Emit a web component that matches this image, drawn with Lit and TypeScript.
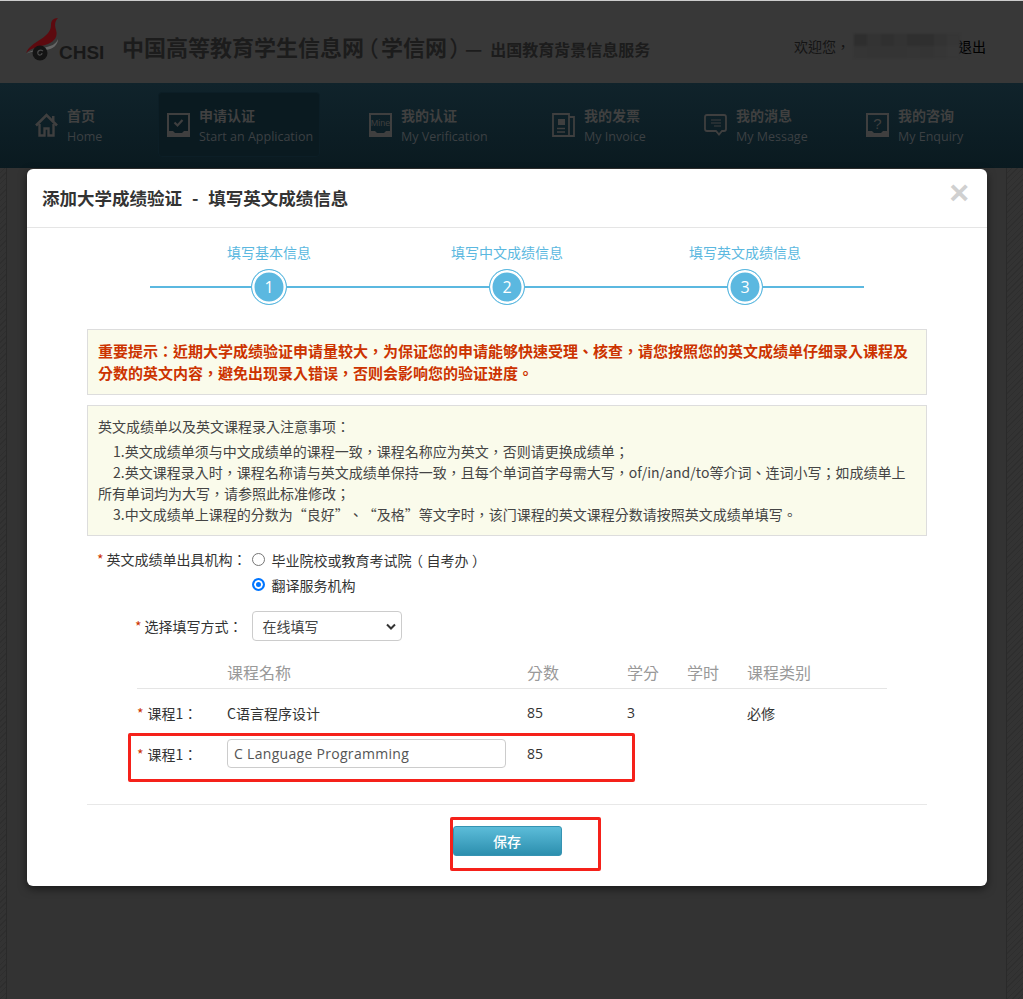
import { LitElement, html, css, svg } from "lit";
import { customElement } from "lit/decorators.js";

const C = "#3f3f3f";
const tray = svg`<path d="M1 1 H22 V23 H1 Z" fill="none" stroke="${C}" stroke-width="2"/><path d="M0 18 H6 L8 20 H15 L17 18 H23 V24 H0 Z" fill="${C}"/>`;
const icons: Record<string, unknown> = {
  home: svg`<path d="M1 12.500 L11.500 2 L22 12.500" fill="none" stroke="${C}" stroke-width="2.600"/><path d="M17 3 H19.500 V8 H17 Z" fill="${C}"/><path d="M4.500 11 V22.500 H9.500 V15.500 H13.500 V22.500 H18.500 V11" fill="none" stroke="${C}" stroke-width="2.400"/>`,
  apply: svg`${tray}<path d="M7.500 9.500 L10.500 12.500 L15.500 7" fill="none" stroke="${C}" stroke-width="2.200"/>`,
  mine: svg`${tray}<text x="11.500" y="12.500" text-anchor="middle" font-size="9" font-family="Liberation Sans" fill="${C}">Mine</text>`,
  invoice: svg`<path d="M1 1 H17 V23 H1 Z M17 4 H22 V23 H17" fill="none" stroke="${C}" stroke-width="1.800"/><path d="M6 6 H13 V12 H6 Z" fill="${C}"/><path d="M5 15.500 H13 M5 19 H13" stroke="${C}" stroke-width="1.500"/>`,
  message: svg`<path d="M3 2 H20 Q22 2 22 4 V16 Q22 18 20 18 H18 L15 21.500 L12 18 H3 Q1 18 1 16 V4 Q1 2 3 2 Z" fill="none" stroke="${C}" stroke-width="1.800"/><path d="M7 7 H17 M7 10 H17 M10 13 H17" stroke="${C}" stroke-width="1.200"/>`,
  enquiry: svg`${tray}<text x="11.500" y="15.500" text-anchor="middle" font-size="15" font-family="Liberation Sans" fill="${C}">?</text>`,
};

const nav = [
  { cn: "首页", en: "Home", icon: "home" },
  { cn: "申请认证", en: "Start an Application", icon: "apply", active: true },
  { cn: "我的认证", en: "My Verification", icon: "mine" },
  { cn: "我的发票", en: "My Invoice", icon: "invoice" },
  { cn: "我的消息", en: "My Message", icon: "message" },
  { cn: "我的咨询", en: "My Enquiry", icon: "enquiry" },
];

const mosaic = ["#2e2e2e","#333","#303030","#333","#2f2f2f","#2f2f2f","#333","#363636",
                "#353535","#343434","#343434","#343434","#353535","#343434","#363636","#383838"];

@customElement("app-root")
export class AppRoot extends LitElement {
  static styles = css`
    :host { display: block; position: relative; height: 999px; overflow: hidden; background: #333;
      font-family: "Noto Sans CJK TC", "Noto Sans", sans-serif; font-size: 14px; color: #333;
      text-spacing-trim: space-all; font-kerning: none; }
    .strip { height: 1px; background: #ccc; }
    .head { height: 82px; background: #383838; display: flex; align-items: center; padding-left: 26px; box-sizing: border-box; }
    .logo { display: flex; align-items: flex-end; width: 96px; height: 44px; position: relative; }
    .logo svg { position: absolute; left: 0; top: -2px; }
    .chsi { font: bold 19px "Liberation Sans", sans-serif; color: #181818; margin-left: 33px; }
    .t1 { font-size: 22px; font-weight: 700; color: #1c1c1c; margin-top: 7px; white-space: nowrap; }
    .t1 .tp { font-weight: 500; font-feature-settings: "palt"; margin: 0 3px; }
    .t2 { font-size: 16px; font-weight: 700; color: #1c1c1c; white-space: nowrap; margin: 10px 0 0 1px; }
    .dash { font-size: 19px; margin-right: 8px; }
    .welcome { margin-left: auto; margin-right: 37px; display: flex; align-items: center; font-size: 14px; color: #141414; margin-top: 7px; }
    .mosaic { width: 106px; height: 24px; margin-left: 4px; margin-right: -2px; display: grid; grid-template-columns: repeat(8, 1fr); filter: blur(1px); }
    .welcome a { color: #000; }
    .nav { height: 85px; background: linear-gradient(#10232b, #0a1a20); display: grid; grid-template-columns: 132px 202px 183px 152px 162px 1fr; padding-left: 26px; padding-top: 9px; box-sizing: border-box; }
    .item { display: inline-flex; align-items: center; gap: 9px; padding: 0 7px 0 9px; height: 65px; box-sizing: border-box; justify-self: start; white-space: nowrap; border-radius: 4px; }
    .item.on { background: #0a1a20; border: 1px solid #0c1e26; padding: 0 6px 0 8px; }
    .item svg { flex: none; }
    .txt { padding-top: 3px; }
    .cn { font-size: 14px; font-weight: 700; line-height: 20px; color: #404040; }
    .en { font-size: 12.5px; line-height: 21px; margin-top: 1px; color: #3c4043; font-family: "Open Sans", "Noto Sans", sans-serif; }
    .body { height: 831px; background: repeating-linear-gradient(135deg, #333 0 3px, #2e2e2e 3px 4px); display: flex; padding: 0 16px 0 6px; box-sizing: border-box; }
    .panel { flex: 1; background: #333; border-left: 1px solid #2a2a2a; border-right: 1px solid #2a2a2a; }

    .modal { position: absolute; left: 27px; top: 169px; width: 960px; height: 717px; background: #fff; border-radius: 6px; box-shadow: 0 3px 9px rgba(0,0,0,.5); }
    .mhead { height: 59px; box-sizing: border-box; border-bottom: 1px solid #e5e5e5; padding: 0 15px; display: flex; justify-content: space-between; }
    .mtitle { font-size: 17.5px; font-weight: 700; color: #333; line-height: 58px; white-space: pre; word-spacing: 1px; }
    .close { font: bold 34px/47px "Liberation Sans", sans-serif; color: #d0d0d0; margin-right: 3px; }
    .steps { position: relative; height: 101px; margin: 0 123px; display: grid; grid-template-columns: repeat(3, 238px); }
    .rail { position: absolute; left: 0; right: 0; top: 58px; height: 2px; background: #5bb8e0; }
    .step { position: relative; display: flex; flex-direction: column; align-items: center; }
    .lbl { font-size: 14px; color: #5bb8e0; line-height: 20px; margin-top: 14px; white-space: nowrap; }
    .dot { margin-top: 7px; width: 36px; height: 36px; border-radius: 50%; background: #5bb8e0; border: 1px solid #5bb8e0; box-sizing: border-box; box-shadow: inset 0 0 0 2.500px #fff; color: #fff; display: flex; align-items: center; justify-content: center; font: 16px "Open Sans", sans-serif; }
    .content { padding: 0 60px; }
    .box { background: #fafbeb; border: 1px solid #ddd; box-sizing: border-box; padding: 10px 10px; font-size: 14px; line-height: 22px; }
    .warn { height: 66px; color: #cc3300; font-weight: 700; font-size: 15px; margin-bottom: 10px; }
    .note { height: 131px; color: #444; line-height: 21px; padding-top: 10px; }
    .note p { margin: 0; }
    .note .h { margin-bottom: 4px; }
    .note .i { text-indent: 15px; }
    .form { margin-top: 11px; font-size: 14px; color: #333; }
    .f1 { display: flex; padding-left: 10px; }
    .star { color: #c30; margin-right: 3px; }
    .radios { margin-left: 5px; display: flex; flex-direction: column; }
    .radio { display: flex; align-items: center; gap: 7px; height: 25px; white-space: nowrap; }
    .radio i { width: 13px; height: 13px; border-radius: 50%; border: 1px solid #767676; box-sizing: border-box; background: #fff; }
    .radio i.on { border: 2px solid #0075ff; box-shadow: inset 0 0 0 2px #fff; background: #0075ff; }
    .pp { font-feature-settings: "palt"; margin: 0 4px; }
    .f1 .l1 { line-height: 25px; }
    .f2 { display: flex; align-items: center; margin-top: 14px; padding-left: 48px; }
    .select { margin-left: 9px; width: 150px; height: 30px; border: 1px solid #ccc; border-radius: 4px; box-sizing: border-box; display: flex; align-items: center; justify-content: space-between; padding: 0 5px 0 10px; color: #444; }
    .tbl { margin: 11px 40px 0 50px; }
    .tr { display: grid; grid-template-columns: 90px 300px 100px 60px 60px 1fr; align-items: center; }
    .tr .star { margin-right: 4px; }
    .thead { height: 37px; border-bottom: 1px solid #e5e5e5; color: #999; font-size: 16px; box-sizing: border-box; padding-top: 3px; }
    .r1 { height: 47px; }
    .r2 { height: 31px; margin-top: 2px; }
    .num { font-family: "Open Sans", "Noto Sans", sans-serif; }
    .input { width: 279px; height: 29px; box-sizing: border-box; border: 1px solid #ccc; border-radius: 4px; padding: 0 6px; font-size: 14px; line-height: 27px; color: #555; font-family: "Open Sans", "Noto Sans", sans-serif; letter-spacing: .3px; white-space: nowrap; }
    .foot { position: absolute; left: 60px; right: 60px; top: 635px; border-top: 1px solid #e8e8e8; display: flex; justify-content: center; padding-top: 21px; }
    .btn { width: 109px; height: 30px; border-radius: 3px; background: linear-gradient(#5cbcd9, #2c8fae); border: 1px solid #3593b2; box-sizing: border-box; color: #fff; font-size: 14px; font-weight: 500; display: flex; align-items: center; justify-content: center; }
    .mark { position: absolute; border: 3px solid #f5211a; border-radius: 2px; box-sizing: border-box; }
    .m1 { left: 128px; top: 733px; width: 507px; height: 49px; }
    .m2 { left: 450px; top: 817px; width: 151px; height: 54px; }
  `;

  render() {
    return html`
      <div class="strip"></div>
      <div class="head">
        <div class="logo">
          <svg width="34" height="46" viewBox="0 0 34 46">
            <path d="M32 0 C27 0 25 3 25 7 C25 14 20 18 12 23 C6 27 2 30 0 35 C6 29 14 29 22 26 C29 23 32 18 30 12 C29 8 28 4 32 0 Z" fill="#5d0a0f"/>
            <path d="M0 36 C7 31 16 31 24 28 C28 27 31 24 32 21 C32 27 27 31 20 32 C12 33 5 33 0 36 Z" fill="#666"/>
            <circle cx="14" cy="35" r="7.500" fill="#141414"/>
            <path d="M17 33 C14 31 11 33 12 36 C13 38 16 37 16 35" fill="none" stroke="#4a4a4a" stroke-width="1.200"/>
          </svg>
          <span class="chsi">CHSI</span>
        </div>
        <span class="t1">中国高等教育学生信息网<span class="tp">（</span>学信网<span class="tp">）</span></span>
        <span class="t2"><span class="dash">—</span>出国教育背景信息服务</span>
        <div class="welcome">欢迎您，<span class="mosaic">${mosaic.map(c => html`<i style="background:${c}"></i>`)}</span><a>退出</a></div>
      </div>
      <div class="nav">
        ${nav.map(n => html`<div class="item ${n.active ? "on" : ""}">
          <svg width="23" height="24" viewBox="0 0 23 24">${icons[n.icon]}</svg>
          <div class="txt"><div class="cn">${n.cn}</div><div class="en">${n.en}</div></div>
        </div>`)}
      </div>
      <div class="body"><div class="panel"></div></div>

      <div class="modal">
        <div class="mhead"><div class="mtitle">添加大学成绩验证  -  填写英文成绩信息</div><div class="close">×</div></div>
        <div class="steps">
          <div class="rail"></div>
          ${["填写基本信息", "填写中文成绩信息", "填写英文成绩信息"].map((s, i) => html`<div class="step"><div class="lbl">${s}</div><div class="dot">${i + 1}</div></div>`)}
        </div>
        <div class="content">
          <div class="box warn">重要提示：近期大学成绩验证申请量较大，为保证您的申请能够快速受理、核查，请您按照您的英文成绩单仔细录入课程及分数的英文内容，避免出现录入错误，否则会影响您的验证进度。</div>
          <div class="box note">
            <p class="h">英文成绩单以及英文课程录入注意事项：</p>
            <p class="i">1.英文成绩单须与中文成绩单的课程一致，课程名称应为英文，否则请更换成绩单；</p>
            <p class="i">2.英文课程录入时，课程名称请与英文成绩单保持一致，且每个单词首字母需大写，of/in/and/to等介词、连词小写；如成绩单上所有单词均为大写，请参照此标准修改；</p>
            <p class="i">3.中文成绩单上课程的分数为“良好”、“及格”等文字时，该门课程的英文课程分数请按照英文成绩单填写。</p>
          </div>
          <div class="form">
            <div class="f1">
              <div class="l1"><span class="star">*</span>英文成绩单出具机构：</div>
              <div class="radios">
                <div class="radio"><i></i><span>毕业院校或教育考试院<span class="pp">（</span>自考办<span class="pp">）</span></span></div>
                <div class="radio"><i class="on"></i>翻译服务机构</div>
              </div>
            </div>
            <div class="f2">
              <div><span class="star">*</span>选择填写方式：</div>
              <div class="select">在线填写
                <svg width="10" height="7" viewBox="0 0 10 7"><path d="M1 1.500 L5 5.500 L9 1.500" fill="none" stroke="#333" stroke-width="2"/></svg>
              </div>
            </div>
            <div class="tbl">
              <div class="tr thead"><span></span><span>课程名称</span><span>分数</span><span>学分</span><span>学时</span><span>课程类别</span></div>
              <div class="tr r1"><span><span class="star">*</span>课程1：</span><span>C语言程序设计</span><span class="num">85</span><span class="num">3</span><span></span><span>必修</span></div>
              <div class="tr r2"><span><span class="star">*</span>课程1：</span><span class="input">C Language Programming</span><span class="num">85</span></div>
            </div>
          </div>
        </div>
        <div class="foot"><div class="btn">保存</div></div>
      </div>
      <div class="mark m1"></div>
      <div class="mark m2"></div>
    `;
  }
}
